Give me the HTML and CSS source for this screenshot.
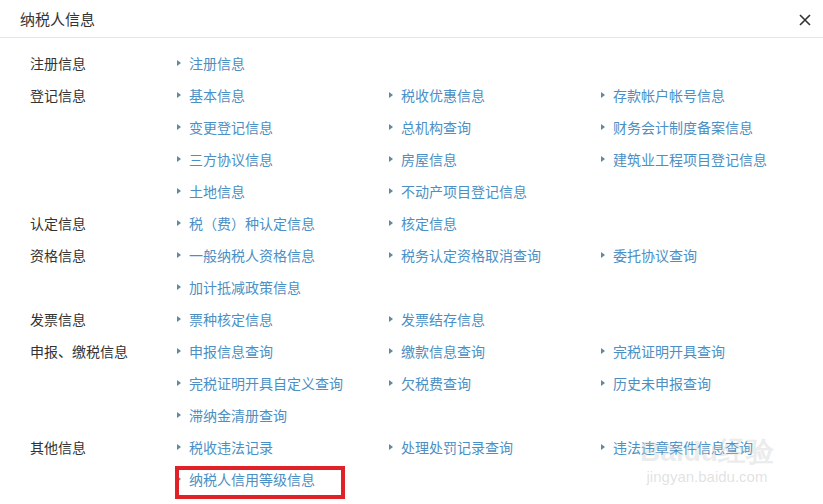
FILE: index.html
```html
<!DOCTYPE html>
<html lang="zh">
<head>
<meta charset="utf-8">
<link rel="stylesheet" href="styles.css">
</head>
<body>
<div class="dialog">
  <div class="header">
    <span class="title">纳税人信息</span>
    <span class="close">
      <svg width="12" height="12" viewBox="0 0 12 12"><path d="M1 1L11 11M11 1L1 11" stroke="#333" stroke-width="1.6"/></svg>
    </span>
  </div>
  <div class="body">
    <div class="row">
      <div class="label">注册信息</div>
      <div class="links">
        <a class="link">注册信息</a>
      </div>
    </div>
    <div class="row">
      <div class="label">登记信息</div>
      <div class="links">
        <a class="link">基本信息</a>
        <a class="link">税收优惠信息</a>
        <a class="link">存款帐户帐号信息</a>
        <a class="link">变更登记信息</a>
        <a class="link">总机构查询</a>
        <a class="link">财务会计制度备案信息</a>
        <a class="link">三方协议信息</a>
        <a class="link">房屋信息</a>
        <a class="link">建筑业工程项目登记信息</a>
        <a class="link">土地信息</a>
        <a class="link">不动产项目登记信息</a>
      </div>
    </div>
    <div class="row">
      <div class="label">认定信息</div>
      <div class="links">
        <a class="link">税（费）种认定信息</a>
        <a class="link">核定信息</a>
      </div>
    </div>
    <div class="row">
      <div class="label">资格信息</div>
      <div class="links">
        <a class="link">一般纳税人资格信息</a>
        <a class="link">税务认定资格取消查询</a>
        <a class="link">委托协议查询</a>
        <a class="link">加计抵减政策信息</a>
      </div>
    </div>
    <div class="row">
      <div class="label">发票信息</div>
      <div class="links">
        <a class="link">票种核定信息</a>
        <a class="link">发票结存信息</a>
      </div>
    </div>
    <div class="row">
      <div class="label">申报、缴税信息</div>
      <div class="links">
        <a class="link">申报信息查询</a>
        <a class="link">缴款信息查询</a>
        <a class="link">完税证明开具查询</a>
        <a class="link">完税证明开具自定义查询</a>
        <a class="link">欠税费查询</a>
        <a class="link">历史未申报查询</a>
        <a class="link">滞纳金清册查询</a>
      </div>
    </div>
    <div class="row">
      <div class="label">其他信息</div>
      <div class="links">
        <a class="link">税收违法记录</a>
        <a class="link">处理处罚记录查询</a>
        <a class="link">违法违章案件信息查询</a>
        <a class="link highlight">纳税人信用等级信息</a>
      </div>
    </div>
  </div>
  <div class="watermark">
    <div class="wm-big">Baidu经验</div>
    <div class="wm-small">jingyan.baidu.com</div>
  </div>
</div>
</body>
</html>
```

FILE: styles.css
```css
html, body {
  margin: 0;
  padding: 0;
  background: #fff;
}
body {
  font-family: "Microsoft YaHei", "Noto Sans CJK SC", "Noto Sans", sans-serif;
  width: 823px;
  height: 504px;
  overflow: hidden;
}
.dialog {
  position: relative;
  width: 823px;
  height: 504px;
}
.header {
  height: 37px;
  border-bottom: 1px solid #e6e6e6;
  display: flex;
  align-items: center;
  justify-content: space-between;
  padding: 0 12px 0 20px;
}
.title {
  font-size: 15px;
  color: #333;
  line-height: 37px;
}
.close {
  display: flex;
  align-items: center;
  height: 37px;
  padding-top: 2px;
}
.body {
  padding-top: 9px;
}
.row {
  display: flex;
}
.label {
  width: 146px;
  padding-left: 30px;
  font-size: 14px;
  color: #333;
  line-height: 32px;
  height: 32px;
  flex-shrink: 0;
}
.links {
  display: grid;
  grid-template-columns: 212px 212px 212px;
}
.link {
  display: flex;
  align-items: center;
  height: 32px;
  font-size: 14px;
  color: #4b8fc4;
  white-space: nowrap;
}
.link::before {
  content: "";
  display: inline-block;
  width: 0;
  height: 0;
  border-top: 3.5px solid transparent;
  border-bottom: 3.5px solid transparent;
  border-left: 4px solid #5d8a9c;
  margin-right: 8px;
  margin-left: 1px;
}
.highlight {
  position: relative;
}
.highlight::after {
  content: "";
  position: absolute;
  left: -1px;
  top: 3px;
  width: 170px;
  height: 33px;
  border: 4px solid #e02128;
  box-sizing: border-box;
}
.watermark {
  position: absolute;
  left: 632px;
  top: 436px;
  width: 150px;
  text-align: center;
  pointer-events: none;
}
.wm-big {
  font-family: "Liberation Sans", sans-serif;
  font-size: 28px;
  font-weight: bold;
  line-height: 32px;
  color: rgba(200, 200, 200, 0.35);
}
.wm-small {
  font-family: "Liberation Sans", sans-serif;
  font-size: 15px;
  line-height: 18px;
  color: rgba(190, 190, 190, 0.45);
}
```
